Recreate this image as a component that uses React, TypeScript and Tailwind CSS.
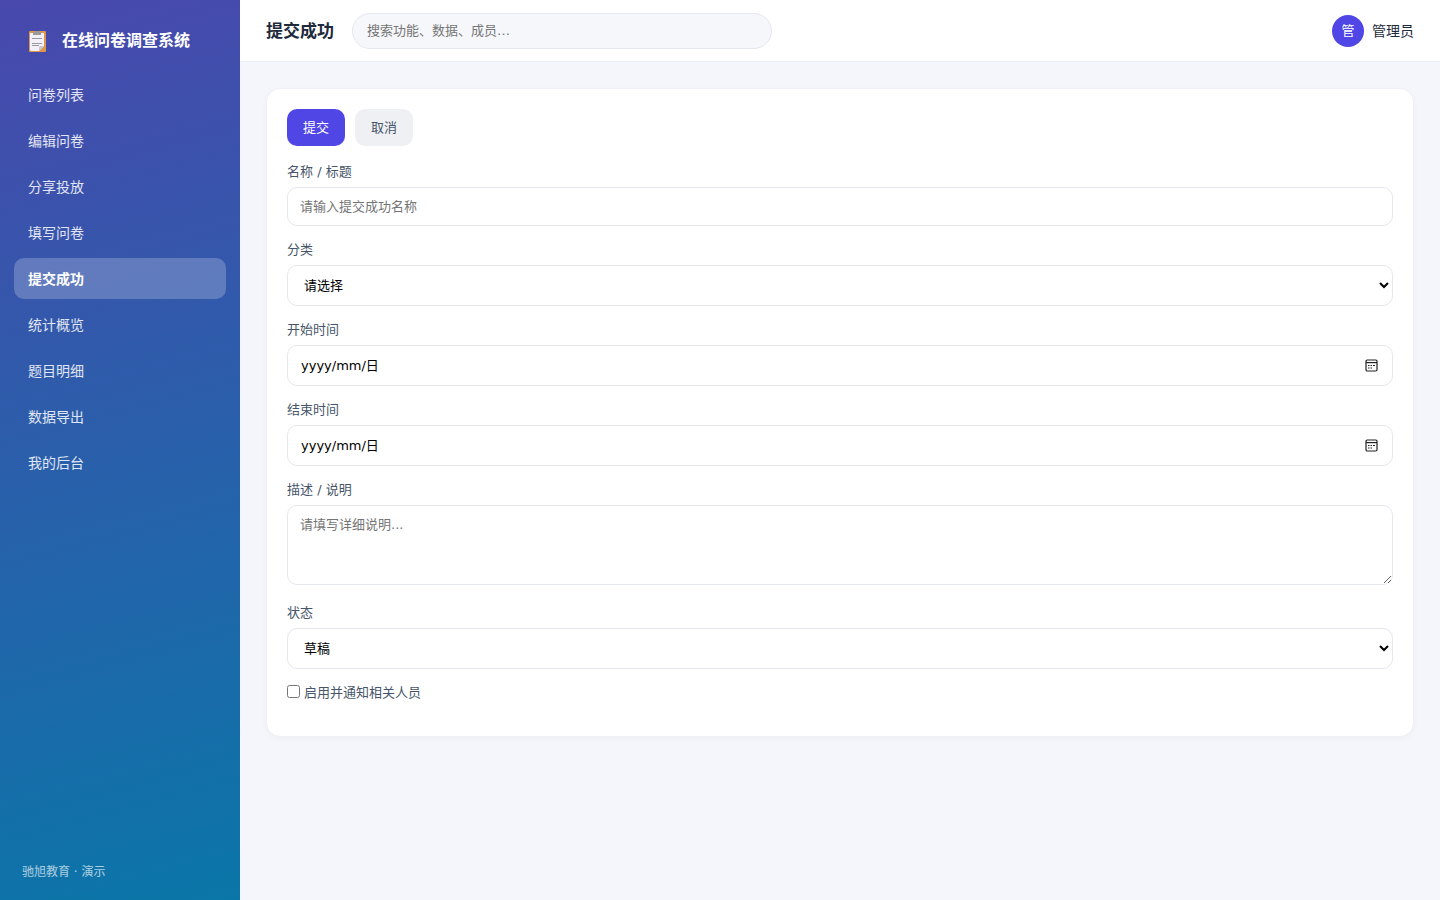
import React, { useState } from 'react';

const navItems = [
  '问卷列表',
  '编辑问卷',
  '分享投放',
  '填写问卷',
  '提交成功',
  '统计概览',
  '题目明细',
  '数据导出',
  '我的后台',
];

const controlClass =
  'block w-full rounded-[10px] border border-[#e5e7ef] bg-white px-3 text-[13px] text-black placeholder:text-[#757575]';

function ClipboardLogo() {
  return (
    <svg width="17" height="21" viewBox="0 0 17 21" aria-hidden="true">
      <rect width="17" height="21" rx="1" fill="#e0964a" />
      <path d="M1 2h14v13l-5 5H2l-1-1z" fill="#f3f0fa" />
      <path d="M10 20v-4l1-1h4z" fill="#c9c5dc" />
      <path d="M4 1h2.5V0h4v1H12v3H4z" fill="#9a9a9c" />
      <path d="M3 7.5h10M3 12.5h10M3 14.5h7" stroke="#98989f" />
    </svg>
  );
}

function CalendarIcon() {
  return (
    <svg width="13" height="13" viewBox="0 0 13 13" fill="none" aria-hidden="true">
      <rect x="1" y="1" width="11" height="11" rx="1.2" stroke="#222" strokeWidth="1.2" />
      <path d="M1 3.6h11" stroke="#222" strokeWidth="1.2" />
      <path
        d="M3 6.5h1.5M5.5 6.5H7M8 6.5h2M3 9h1.5M5.5 9H7"
        stroke="#222"
        strokeWidth="1.2"
      />
    </svg>
  );
}

type FieldProps = {
  id: string;
  label: string;
  children: React.ReactNode;
};

function Field({ id, label, children }: FieldProps) {
  return (
    <div className="mb-3.5">
      <label htmlFor={id} className="mb-[5px] block text-[13px] leading-5 text-[#475569]">
        {label}
      </label>
      {children}
    </div>
  );
}

function DateInput({ id }: { id: string }) {
  return (
    <div className="relative">
      <input
        id={id}
        type="text"
        placeholder="yyyy/mm/日"
        className="block h-[41px] w-full rounded-[10px] border border-[#e5e7ef] bg-white px-[13px] text-[13px] text-black placeholder:text-black"
      />
      <button
        type="button"
        aria-label="选择日期"
        className="absolute inset-y-0 right-[15px] flex items-center"
      >
        <CalendarIcon />
      </button>
    </div>
  );
}

function Sidebar() {
  const [active, setActive] = useState('提交成功');

  return (
    <aside className="flex w-60 shrink-0 flex-col bg-[linear-gradient(165deg,#4948ad_0%,#0a76a8_100%)] px-3.5 text-white">
      <div className="flex h-[74px] items-center gap-4 px-[15px] pt-2">
        <ClipboardLogo />
        <span className="text-base font-bold">在线问卷调查系统</span>
      </div>
      <nav className="flex flex-col gap-[5px]">
        {navItems.map((item) => (
          <a
            key={item}
            href="#"
            onClick={() => setActive(item)}
            className={
              item === active
                ? 'flex h-[41px] items-center rounded-[10px] bg-white/22 px-3.5 text-sm font-bold text-white'
                : 'flex h-[41px] items-center rounded-[10px] px-3.5 text-sm text-white/85'
            }
          >
            {item}
          </a>
        ))}
      </nav>
      <div className="mt-auto px-2 pb-5 text-xs leading-4 text-white/65">
        驰旭教育 · 演示
      </div>
    </aside>
  );
}

function Header() {
  return (
    <header className="flex h-[62px] items-center justify-between border-b border-[#eceef4] bg-white px-[26px]">
      <div className="flex items-center gap-[18px]">
        <h1 className="pt-0.5 text-[17px] font-bold text-[#1e293b]">提交成功</h1>
        <input
          type="search"
          aria-label="搜索"
          placeholder="搜索功能、数据、成员…"
          className="h-9 w-[420px] rounded-full border border-[#e5e7ef] bg-[#f6f7fb] px-3.5 text-[13px] placeholder:text-[#757575]"
        />
      </div>
      <div className="flex items-center gap-2">
        <span className="flex size-8 items-center justify-center rounded-full bg-[#4f46e5] text-[13px] text-white">
          管
        </span>
        <span className="text-sm text-[#1e293b]">管理员</span>
      </div>
    </header>
  );
}

export default function App() {
  return (
    <div className="flex min-h-screen bg-[#f5f6fb] font-['DejaVu_Sans','Noto_Sans_CJK_SC',sans-serif]">
      <Sidebar />
      <div className="min-w-0 flex-1">
        <Header />
        <main className="p-[26px]">
          <form
            onSubmit={(e) => e.preventDefault()}
            className="rounded-[14px] border border-[#eef0f5] bg-white p-5 shadow-[0_2px_6px_rgba(30,41,59,0.03)]"
          >
            <div className="mb-4 flex gap-2.5">
              <button
                type="submit"
                className="h-[37px] rounded-[10px] bg-[#4f46e5] px-4 text-[13px] text-white"
              >
                提交
              </button>
              <button
                type="button"
                className="h-[37px] rounded-[10px] bg-[#eef0f4] px-4 text-[13px] text-[#475569]"
              >
                取消
              </button>
            </div>
            <Field id="name" label="名称 / 标题">
              <input
                id="name"
                type="text"
                placeholder="请输入提交成功名称"
                className={`${controlClass} h-[39px]`}
              />
            </Field>
            <Field id="category" label="分类">
              <select id="category" className={`${controlClass} h-[41px]`}>
                <option>请选择</option>
              </select>
            </Field>
            <Field id="start" label="开始时间">
              <DateInput id="start" />
            </Field>
            <Field id="end" label="结束时间">
              <DateInput id="end" />
            </Field>
            <Field id="description" label="描述 / 说明">
              <textarea
                id="description"
                placeholder="请填写详细说明..."
                className={`${controlClass} mb-[18px] h-20 resize-y py-2.5 leading-[18px]`}
              />
            </Field>
            <Field id="status" label="状态">
              <select id="status" className={`${controlClass} h-[41px]`}>
                <option>草稿</option>
              </select>
            </Field>
            <label className="mb-[13px] flex items-start gap-1 text-[13px] leading-5 text-[#475569]">
              <input type="checkbox" className="mt-0.5 size-[13px]" />
              启用并通知相关人员
            </label>
          </form>
        </main>
      </div>
    </div>
  );
}
